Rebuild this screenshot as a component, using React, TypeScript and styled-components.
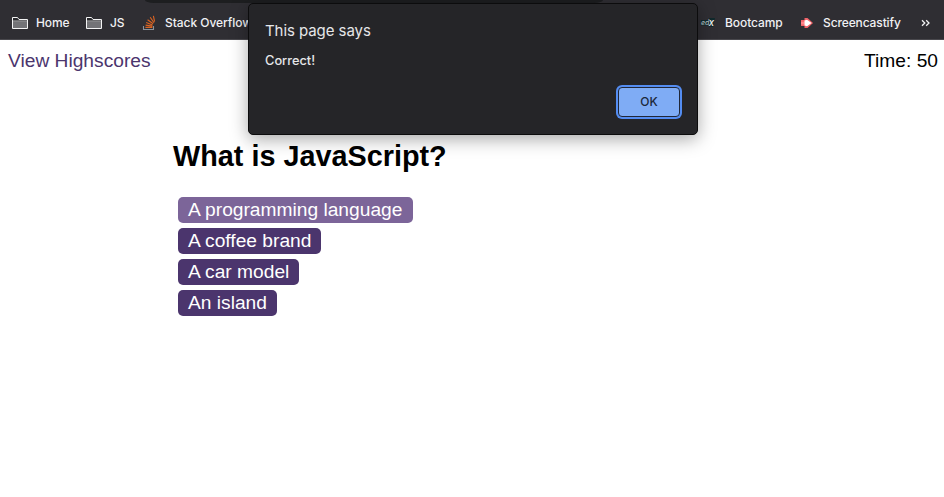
import React from "react";
import styled, { createGlobalStyle } from "styled-components";

const GlobalStyle = createGlobalStyle`
  * { box-sizing: border-box; }
  body {
    margin: 0;
    background: #fff;
    color: #000;
    font-family: "Liberation Sans", Arial, sans-serif;
    overflow: hidden;
  }
`;

const Window = styled.div`
  position: relative;
  height: 497px;
  overflow: hidden;
`;

const BookmarksBar = styled.nav`
  display: flex;
  flex-direction: column;
  height: 40px;
  background: #2f2e33;
  border-bottom: 1px solid #49484d;
  color: #f1f1f3;
  font: 500 12px/16px Inter, sans-serif;
`;

const AddressEdge = styled.div`
  width: 458px;
  height: 3px;
  margin-left: 145px;
  flex: none;
  background: #1d1e20;
  border-radius: 0 0 9px 9px / 0 0 3px 3px;
`;

const BookmarkRow = styled.div`
  display: flex;
  justify-content: space-between;
  padding: 12px 13px 0 12px;
`;

const BookmarkGroup = styled.div<{ $gap: number }>`
  display: flex;
  align-items: center;
  gap: ${(p) => p.$gap}px;
`;

const Bookmark = styled.a<{ $gap: number; $width: number; $tracking?: number }>`
  display: flex;
  align-items: center;
  gap: ${(p) => p.$gap}px;
  width: ${(p) => p.$width}px;
  height: 16px;
  white-space: nowrap;
  letter-spacing: ${(p) => p.$tracking ?? 0}px;

  svg { flex: none; display: block; overflow: visible; }
`;

const Header = styled.header`
  display: flex;
  justify-content: space-between;
  padding: 10px 6px 0 8px;
  font-size: 19.2px;
  line-height: 22px;
`;

const HighscoresLink = styled.a`
  color: #4b356d;
`;

const Quiz = styled.main`
  margin: 65px 0 0 173px;
`;

const Question = styled.h1`
  margin: 0;
  font-size: 28.8px;
  line-height: 38px;
  font-weight: 700;
`;

const Answers = styled.div`
  display: flex;
  flex-direction: column;
  align-items: flex-start;
  gap: 5px;
  margin: 22px 0 0 5px;
`;

const Answer = styled.button<{ $active?: boolean }>`
  height: 26px;
  padding: 0 ${(p) => (p.$active ? "10.5px" : "10px")} 0 10px;
  border: 0;
  border-radius: 5px;
  background: ${(p) => (p.$active ? "#7c6599" : "#4b356d")};
  color: #fff;
  font: 19.2px/26px "Liberation Sans", Arial, sans-serif;
`;

const Dialog = styled.section`
  position: absolute;
  top: 3px;
  left: 248px;
  display: flex;
  flex-direction: column;
  width: 450px;
  height: 132px;
  padding: 17px 16px 17px 17px;
  border: 1px solid #0c0c0d;
  border-radius: 5px;
  background: #252528;
  color: #e6e7e9;
  font-family: Inter, sans-serif;
  box-shadow: 0 4px 18px rgba(0, 0, 0, 0.35);
`;

const DialogTitle = styled.h2`
  margin: 0 0 0 -1px;
  font-size: 15px;
  line-height: 20px;
  font-weight: 400;
  letter-spacing: -0.07px;
`;

const Message = styled.p`
  margin: 12px 0 0 -1px;
  font-size: 12.8px;
  line-height: 16px;
  font-weight: 450;
`;

const OkButton = styled.button`
  align-self: flex-end;
  width: 62px;
  height: 30px;
  margin: auto 1px 0 0;
  padding: 0;
  border: 1px solid #202738;
  border-radius: 4px;
  background: #7facf5;
  color: #1c283b;
  font: 500 12px/28px Inter, sans-serif;
  box-shadow: 0 0 0 2px #548df2;
`;

const FolderIcon = () => (
  <svg width="16" height="14" viewBox="0 0 16 14">
    <path d="M.5 12.5v-11h5l1.5 2h8.5v9Z" fill="#29292d" stroke="#f3f3f4" />
    <path d="M1 5.5h14V12H1Z" fill="#737377" />
    <path d="M1 5h14" stroke="#d5d5d7" strokeWidth=".8" />
  </svg>
);

const StackIcon = () => (
  <svg width="14" height="16" viewBox="0 0 14 16" fill="none">
    <path d="M1.5 11v3.5h10V11" stroke="#8b929a" strokeWidth="1.1" />
    <path d="M3.4 12.4h7M3.6 10.1l6.8 1M4.2 7.5l6.3 2.4M5.6 4.8l5.5 4M8.2 2.2l3.8 5.6M11.4.8l1.2 5.8" stroke="#dc6422" strokeWidth="1.1" />
  </svg>
);

const EdxIcon = () => (
  <svg width="16" height="10" viewBox="0 0 16 10">
    <path d="M0 2h8V0h6l-2 9H8V7.5H0Z" fill="#10292c" />
    <text x="0" y="7" fill="#b4c0c1" fontFamily="Inter, sans-serif" fontSize="7" fontStyle="italic">ed</text>
    <text x="7.8" y="8" fill="#f1f3f3" fontFamily="Inter, sans-serif" fontSize="9.5" fontStyle="italic" fontWeight="500">x</text>
  </svg>
);

const ScreencastifyIcon = () => (
  <svg width="13" height="12" viewBox="0 0 13 12">
    <path d="M0 3h3.5V1h3L12 6l-5.5 5h-3V9H0Z" fill="#f16369" />
    <path d="M0 4.8h3.5v2.6H0Z" fill="#ff8488" />
    <path d="M3.5 3.5 6 2.8 10.5 6 6 9.2l-2.5-.7Z" fill="#fff" />
  </svg>
);

const MoreIcon = () => (
  <svg width="10" height="8" viewBox="0 0 10 8" fill="none" stroke="#f1f1f3" strokeWidth="1.3">
    <path d="m1 1.2 2.8 2.8L1 6.8M5.2 1.2 8 4 5.2 6.8" />
  </svg>
);

export default function App() {
  return (
    <>
      <GlobalStyle />
      <Window>
        <BookmarksBar>
          <AddressEdge />
          <BookmarkRow>
            <BookmarkGroup $gap={16}>
              <Bookmark $gap={8} $width={58} $tracking={-0.1}><FolderIcon />Home</Bookmark>
              <Bookmark $gap={8} $width={40} $tracking={-0.1}><FolderIcon />JS</Bookmark>
              <Bookmark $gap={9} $width={110} $tracking={-0.05}><StackIcon />Stack Overflow</Bookmark>
            </BookmarkGroup>
            <BookmarkGroup $gap={18}>
              <Bookmark $gap={8} $width={82} $tracking={-0.08}><EdxIcon />Bootcamp</Bookmark>
              <Bookmark $gap={9} $width={102} $tracking={-0.12}><ScreencastifyIcon />Screencastify</Bookmark>
              <MoreIcon />
            </BookmarkGroup>
          </BookmarkRow>
        </BookmarksBar>
        <Header>
          <HighscoresLink>View Highscores</HighscoresLink>
          <span>Time: 50</span>
        </Header>
        <Quiz>
          <Question>What is JavaScript?</Question>
          <Answers>
            <Answer $active>A programming language</Answer>
            <Answer>A coffee brand</Answer>
            <Answer>A car model</Answer>
            <Answer>An island</Answer>
          </Answers>
        </Quiz>
        <Dialog role="alertdialog">
          <DialogTitle>This page says</DialogTitle>
          <Message>Correct!</Message>
          <OkButton>OK</OkButton>
        </Dialog>
      </Window>
    </>
  );
}
